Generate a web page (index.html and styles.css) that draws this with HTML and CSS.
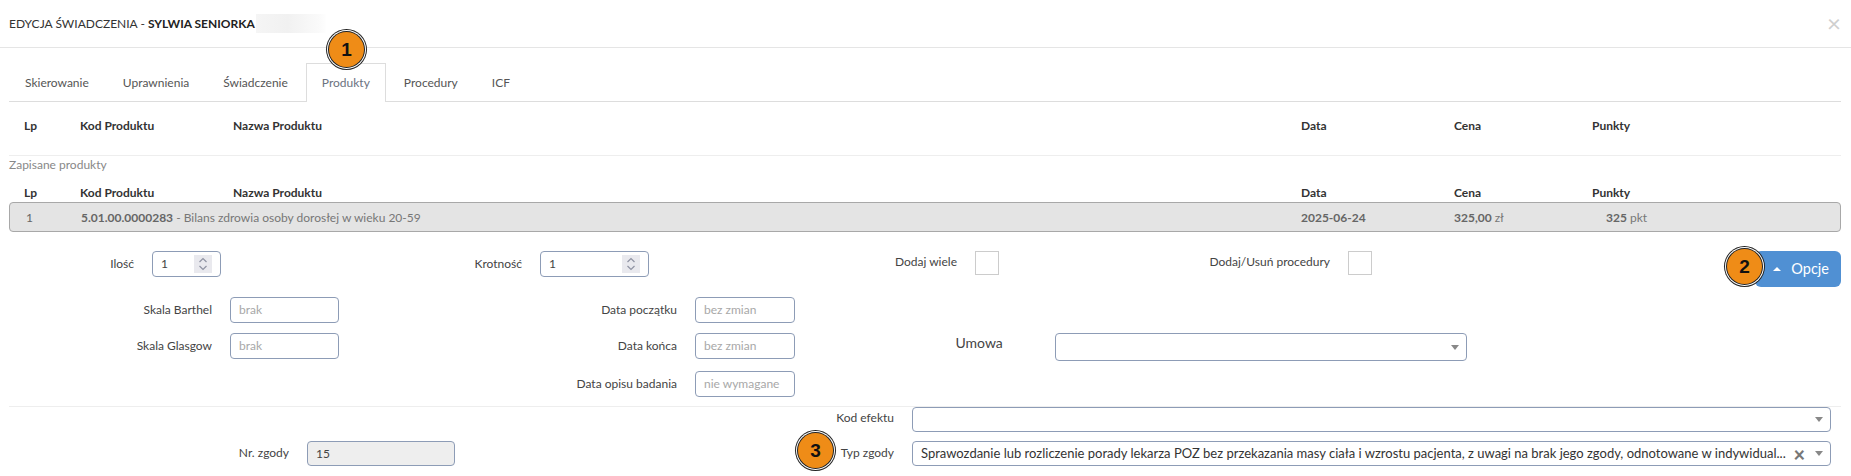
FILE: index.html
```html
<!DOCTYPE html>
<html lang="pl">
<head>
<meta charset="utf-8">
<title>Edycja świadczenia</title>
<link rel="stylesheet" href="styles.css">
</head>
<body>
<div class="modal">
  <header class="modal-header">
    <h1 class="title">EDYCJA ŚWIADCZENIA - <strong>SYLWIA SENIORKA</strong><span class="blur"></span></h1>
    <span class="close">×</span>
  </header>
  <div class="content">
    <ul class="tabs">
      <li class="tab">Skierowanie</li>
      <li class="tab">Uprawnienia</li>
      <li class="tab">Świadczenie</li>
      <li class="tab active">Produkty</li>
      <li class="tab">Procedury</li>
      <li class="tab">ICF</li>
    </ul>
    <div class="cols head head-top">
      <span>Lp</span><span>Kod Produktu</span><span>Nazwa Produktu</span><span>Data</span><span>Cena</span><span>Punkty</span>
    </div>
    <div class="saved">Zapisane produkty</div>
    <div class="cols head head-saved">
      <span>Lp</span><span>Kod Produktu</span><span>Nazwa Produktu</span><span>Data</span><span>Cena</span><span>Punkty</span>
    </div>
    <div class="cols product">
      <span class="p-lp">1</span>
      <span class="p-code"><b>5.01.00.0000283</b> - Bilans zdrowia osoby dorosłej w wieku 20-59</span>
      <span></span>
      <span class="p-date"><b>2025-06-24</b></span>
      <span class="p-price"><b>325,00</b> zł</span>
      <span class="p-points"><b>325</b> pkt</span>
    </div>
    <div class="row-top">
      <label class="lbl">Ilość</label>
      <div class="field spin"><span>1</span><span class="spinner"><svg viewBox="0 0 18 18" width="18" height="18"><path d="M5.500 7 9 3.500 12.500 7M5.500 11 9 14.500 12.500 11" fill="none" stroke="#8f93a3" stroke-width="1.200"/></svg></span></div>
      <label class="lbl">Krotność</label>
      <div class="field spin"><span>1</span><span class="spinner"><svg viewBox="0 0 18 18" width="18" height="18"><path d="M5.500 7 9 3.500 12.500 7M5.500 11 9 14.500 12.500 11" fill="none" stroke="#8f93a3" stroke-width="1.200"/></svg></span></div>
      <label class="lbl lbl-check">Dodaj wiele</label>
      <span class="check"></span>
      <label class="lbl lbl-check">Dodaj/Usuń procedury</label>
      <span class="check"></span>
      <button class="options" type="button"><span class="caret-up"></span>Opcje</button>
    </div>
    <div class="row-mid">
      <label class="lbl r1 c1">Skala Barthel</label>
      <div class="field ph r1 c2">brak</div>
      <label class="lbl r1 c3">Data początku</label>
      <div class="field ph r1 c4">bez zmian</div>
      <label class="lbl r2 c1">Skala Glasgow</label>
      <div class="field ph r2 c2">brak</div>
      <label class="lbl r2 c3">Data końca</label>
      <div class="field ph r2 c4">bez zmian</div>
      <label class="umowa">Umowa</label>
      <div class="field select umowa-select"><span class="arrow"></span></div>
      <label class="lbl r3 c3">Data opisu badania</label>
      <div class="field ph r3 c4">nie wymagane</div>
    </div>
    <div class="row-bottom">
      <label class="lbl b1">Kod efektu</label>
      <div class="field select b1 c-sel"><span class="arrow"></span></div>
      <label class="lbl b2">Nr. zgody</label>
      <div class="field readonly b2">15</div>
      <label class="lbl b2">Typ zgody</label>
      <div class="field select b2 c-sel"><span class="sel-text">Sprawozdanie lub rozliczenie porady lekarza POZ bez przekazania masy ciała i wzrostu pacjenta, z uwagi na brak jego zgody, odnotowane w indywidual...</span><span class="clear">×</span><span class="arrow"></span></div>
    </div>
  </div>
  <span class="badge badge-1">1</span>
  <span class="badge badge-2">2</span>
  <span class="badge badge-3">3</span>
</div>
</body>
</html>
```

FILE: styles.css
```css
* { box-sizing: border-box; }
html, body { margin: 0; padding: 0; background: #fff; }
body { font-family: Lato, "Open Sans", sans-serif; font-size: 12px; color: #444; overflow: hidden; }

.modal { position: relative; width: 1851px; height: 476px; overflow: hidden; }

.modal-header { height: 48px; border-bottom: 1px solid #e5e5e5; padding: 0 10px 0 9px; display: flex; justify-content: space-between; align-items: flex-start; }
.title { margin: 15px 0 0; font-size: 12px; line-height: 18px; font-weight: 400; color: #333; display: flex; white-space: pre; }
.title strong { font-weight: 700; color: #222; }
.blur { display: block; width: 70px; height: 19px; margin: -1px 0 0 1px; background: linear-gradient(90deg, #f5f5f5 0, #f1f1f1 45%, #f6f6f6 70%, #fafafa 90%, #fefefe 100%); }
.close { margin: 11px 0 0; font-size: 24px; line-height: 24px; color: #cfcfcf; }

.content { padding: 15px 10px 0 9px; }

.tabs { list-style: none; margin: 0; padding: 0; display: flex; gap: 2px; height: 39px; border-bottom: 1px solid #ddd; }
.tab { height: 39px; padding: 9px 15px; border: 1px solid transparent; border-bottom: 0; font-size: 12px; line-height: 20px; color: #555; }
.tab.active { border-color: #ddd; background: #fff; color: #6b7280; }

.cols { display: grid; grid-template-columns: 56px 153px 1068px 153px 138px 1fr; padding-left: 15px; align-items: center; }
.head { font-weight: 700; color: #333; font-size: 12px; }
.head-top { height: 54px; padding-bottom: 7px; border-bottom: 1px solid #eee; }
.saved { height: 28px; font-size: 12px; line-height: 18px; color: #888; }
.head-saved { height: 18px; line-height: 18px; }

.product { height: 30px; border: 1px solid #a8a8a8; border-radius: 4px; background: #e4e4e4; grid-template-columns: 56px 153px 1067px 153px 138px 1fr; color: #777; font-size: 12px; }
.product b { font-weight: 700; color: #666; }
.p-lp { color: #666; padding-left: 1px; }
.p-code { white-space: nowrap; }
.p-points { padding-left: 14px; }

.row-top { display: grid; grid-template-columns: 143px 69px 319px 109px 326px 24px 349px 24px 1fr; height: 36px; margin-top: 19px; align-items: start; }
.lbl { display: block; text-align: right; padding-right: 18px; line-height: 26px; color: #444; font-size: 12px; white-space: nowrap; }
.lbl-check { line-height: 22px; }
.field { height: 26px; border: 1px solid #8d9cb6; border-radius: 4px; padding: 0 8px; line-height: 24px; color: #444; font-size: 12px; background: #fff; white-space: nowrap; }
.spin { display: flex; justify-content: space-between; }
.spinner { width: 18px; height: 18px; margin-top: 3px; background: #e9e9ee; display: block; }
.spinner svg { display: block; }
.check { width: 24px; height: 24px; border: 1px solid #ccc; display: block; }
.options { justify-self: end; width: 86px; height: 36px; border: 0; border-radius: 6px; background: #5090d3; color: #fff; font: 14.500px/36px Lato, sans-serif; padding: 0 12px 0 18px; display: flex; justify-content: space-between; align-items: center; }
.caret-up { width: 0; height: 0; border: 4px solid transparent; border-bottom: 4px solid #fff; border-top: 0; }

.row-mid { display: grid; grid-template-columns: 221px 108.500px 356.500px 99.500px 260.500px 412px; grid-template-rows: 26px 26px 26px; row-gap: 10px; margin-top: 10px; }
.r1 { grid-row: 1; }
.r2 { grid-row: 2; }
.row-mid .r3 { grid-row: 3; margin-top: 2px; }
.c1 { grid-column: 1; }
.c2 { grid-column: 2; }
.c3 { grid-column: 3; }
.c4 { grid-column: 4; }
.ph { color: #a8a8a8; }
.umowa { grid-column: 5; grid-row: 2; padding-left: 161px; font-size: 14px; line-height: 20px; color: #444; }
.umowa-select { grid-column: 6; grid-row: 2; height: 28px; }

.select { position: relative; display: flex; align-items: center; justify-content: flex-end; padding-right: 7px; }
.arrow { width: 0; height: 0; border: 4px solid transparent; border-top: 5px solid #888; border-bottom: 0; flex: none; }

.row-bottom { display: grid; grid-template-columns: 298px 148px 457px 919px; grid-template-rows: 25px 25px; row-gap: 9px; margin-top: 11px; border-top: 1px solid #eee; width: 1832px; }
.row-bottom .field { height: 25px; line-height: 23px; }
.row-bottom .lbl { line-height: 24px; }
.row-bottom .b1.lbl { line-height: 22px; }
.b1 { grid-row: 1; }
.b2 { grid-row: 2; }
.b1.lbl { grid-column: 3; }
.c-sel { grid-column: 4; }
.readonly { background: #eee; }
.sel-text { flex: 1; min-width: 0; white-space: nowrap; overflow: hidden; color: #333; font-size: 13px; }
.clear { flex: none; margin: 0 10px 0 6px; color: #777; font-size: 20px; font-weight: 900; line-height: 20px; }

.badge { position: absolute; width: 35px; height: 35px; border-radius: 50%; background: #ef8c17; color: #111; font: 700 19px/35px "Liberation Sans", Arial, sans-serif; text-align: center; box-shadow: 0 0 0 1px #222, 0 0 0 2px #fff, 0 0 0 3px #222; }
.badge-1 { left: 329px; top: 32px; }
.badge-2 { left: 1727px; top: 249px; }
.badge-3 { left: 798px; top: 433px; }
```
